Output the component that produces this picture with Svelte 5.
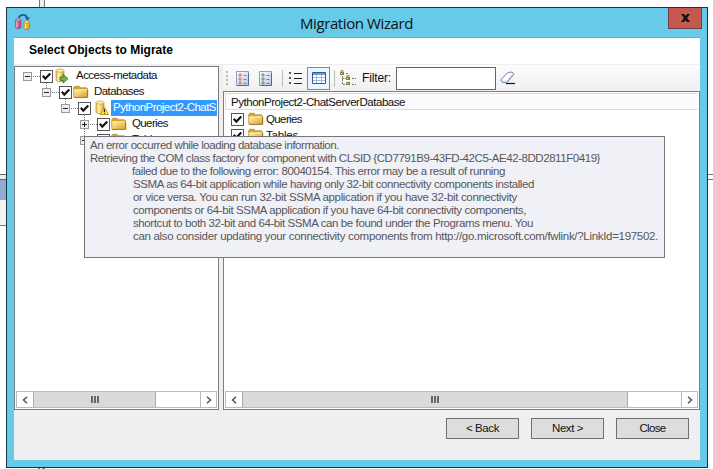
<script>
  const tree = [
    { label: 'Access-metadata', depth: 0, open: true, icon: 'source', width: 81 },
    { label: 'Databases', depth: 1, open: true, icon: 'folder', width: 50 },
    { label: 'PythonProject2-ChatS', depth: 2, open: true, icon: 'database', width: 103, selected: true },
    { label: 'Queries', depth: 3, open: false, icon: 'folder', width: 36 },
    { label: 'Tables', depth: 3, open: false, icon: 'folder', width: 32 }
  ];
  const objects = [
    { label: 'Queries', width: 36 },
    { label: 'Tables', width: 32 }
  ];
  const message = [
    { text: 'An error occurred while loading database information.', indent: 0, width: 249 },
    { text: 'Retrieving the COM class factory for component with CLSID {CD7791B9-43FD-42C5-AE42-8DD2811F0419}', indent: 0, width: 510 },
    { text: 'failed due to the following error: 80040154. This error may be a result of running', indent: 42, width: 373 },
    { text: 'SSMA as 64-bit application while having only 32-bit connectivity components installed', indent: 43, width: 401 },
    { text: 'or vice versa. You can run 32-bit SSMA application if you have 32-bit connectivity', indent: 43, width: 384 },
    { text: 'components or 64-bit SSMA application if you have 64-bit connectivity components,', indent: 43, width: 393 },
    { text: 'shortcut to both 32-bit and 64-bit SSMA can be found under the Programs menu. You', indent: 43, width: 400 },
    { text: 'can also consider updating your connectivity components from http://go.microsoft.com/fwlink/?LinkId=197502.', indent: 43, width: 525 }
  ];
  const buttons = [
    { label: '< Back', width: 33 },
    { label: 'Next >', width: 31 },
    { label: 'Close', width: 26 }
  ];

  // Tracks a label so that it takes the given number of pixels.
  function fit(node, width) {
    const natural = node.getBoundingClientRect().width;
    node.style.letterSpacing = `${(width - natural) / node.textContent.length}px`;
  }
</script>

{#snippet check()}
  <span class="check">
    <svg width="11" height="11" viewBox="0 0 11 11"><path d="M1.8 4.8 4.3 7.6 9.3 2.4" fill="none" stroke="#111" stroke-width="2.1" /></svg>
  </span>
{/snippet}

{#snippet folder()}
  <svg class="ico" width="16" height="14" viewBox="0 0 16 14">
    <path d="M.8 12V2.2L1.8 1.3h4.3l1.2 1.5h6.2l.9.9V12z" fill="#d9a52c" stroke="#b98a2a" stroke-width=".8" />
    <path d="M1.2 12V4.6h13.200V12z" fill="url(#gold)" />
    <path d="M1.500 4.8h12.900" stroke="#fff3b8" stroke-width=".9" />
    <path d="M1 12.4h13.7V4.6" fill="none" stroke="#8f6c22" stroke-width=".9" />
  </svg>
{/snippet}

{#snippet scrollbar(thumb)}
  <div class="scroll">
    <span class="arrow"><svg width="6" height="8" viewBox="0 0 6 8"><path d="M5 .7 1.5 4 5 7.3" /></svg></span>
    <span class="thumb" style:width="{thumb}px"><i></i><i></i><i></i></span>
    <span class="track"></span>
    <span class="arrow end"><svg width="6" height="8" viewBox="0 0 6 8"><path d="M1 .7 4.5 4 1 7.3" /></svg></span>
  </div>
{/snippet}

<div class="desktop">
  <svg class="behind" width="713" height="469" viewBox="0 0 713 469">
    <path d="M39.5 0v8M44.5 0v8" stroke="#777" />
    <path d="M40 0h4v8h-4z" fill="#ededf0" />
    <path d="M0 174h6v5H0z" fill="#eee" />
    <path d="M0 174.5h6M0 179.5h6" stroke="#666" />
    <path d="M0 180h6v20H0z" fill="#91acd3" />
    <path d="M0 200h6v25H0z" fill="#f3f3f3" />
    <path d="M0 225.5h6M708 174.5h5M708 179.5h5" stroke="#777" />
    <path d="M38 468.5h2M42 468.5h3" stroke="#777" />
  </svg>

  <div class="window">
    <header>
      <svg class="app" width="16" height="16" viewBox="0 0 16 16">
        <path d="M.7 6v7c0 2.3 5.3 2.3 5.3 0V6z" fill="#bf5a8b" stroke="#70375c" stroke-width=".6" />
        <path d="M2 6.5v7" stroke="#eec0d7" stroke-width="1.3" />
        <ellipse cx="3.4" cy="6" rx="2.7" ry="1.2" fill="#e3a4c2" stroke="#80466a" stroke-width=".6" />
        <path d="M9 8v6c0 2 5.6 2 5.6 0V8z" fill="#e7b324" stroke="#8a681e" stroke-width=".6" />
        <path d="M10.5 8.5v6" stroke="#fff1a6" stroke-width="1.4" />
        <ellipse cx="11.8" cy="8" rx="2.8" ry="1.2" fill="#ffe98c" stroke="#9a761e" stroke-width=".6" />
        <path d="M3.5 3.8C5.5-.1 11-.2 12.4 4" fill="none" stroke="#2257a8" stroke-width="1.6" />
        <path d="M9.7 3.5h5.4l-2.6 3.3z" fill="#2257a8" />
      </svg>
      <h1><span use:fit={113}>Migration Wizard</span></h1>
      <button class="x" aria-label="Close window">
        <svg width="9" height="8" viewBox="0 0 9 8"><path d="M0 0h3l1.5 2L6 0h3L6 4l3 4H6L4.500 6 3 8H0l3-4z" fill="#111" /></svg>
      </button>
    </header>

    <main>
      <div class="heading"><b use:fit={144}>Select Objects to Migrate</b></div>
      <div class="panes">
        <section class="tree">
          <div class="nodes">
            <svg class="guides" width="90" height="80" viewBox="0 0 90 80">
              <path d="M18 9.500h7M31.500 16v5M37 25.500h7M50.500 32v5M56 41.500h7M69.500 48v5M75 57.500h7M69.500 62v8" />
            </svg>
            {#each tree as node}
              <div class="node" style:padding-left="{8 + node.depth * 19}px">
                <span class="expander"><svg width="7" height="7" viewBox="0 0 7 7"><path d={node.open ? 'M1 3.500h5' : 'M1 3.500h5M3.500 1v5'} stroke="#222" /></svg></span>
                {@render check()}
                {#if node.icon === 'folder'}
                  {@render folder()}
                {:else}
                  <svg class="ico db" class:warn={node.icon === 'database'} width="16" height="16" viewBox="0 0 16 16">
                    <path d="M1 2.700v9.300c0 2.300 8 2.300 8 0V2.700z" fill="url(#barrel)" stroke="#b58a28" stroke-width=".7" />
                    <ellipse cx="5" cy="2.600" rx="4" ry="1.600" fill="#fff0aa" stroke="#c59b36" stroke-width=".7" />
                    {#if node.icon === 'source'}
                      <path d="M5 9h3V6.400l5 4.300-5 4.400v-2.700H5z" fill="#65bd45" stroke="#276c1e" stroke-width=".8" />
                    {:else}
                      <path d="M9.400 7 13.500 14.500H5.300z" fill="#ffe338" stroke="#a98a12" stroke-width=".8" />
                      <path d="M9.400 9v3M9.400 12.700v1" stroke="#222" stroke-width="1.100" />
                    {/if}
                  </svg>
                {/if}
                <span class="label" class:selected={node.selected}><span use:fit={node.width}>{node.label}</span></span>
              </div>
            {/each}
          </div>
          {@render scrollbar(123)}
        </section>

        <section class="right">
          <div class="toolbar">
            <span class="grip"><i></i><i></i><i></i><i></i></span>
            {#each ['#c35069', '#52647f'] as tint}
              <svg class="sheet" width="14" height="17" viewBox="0 0 14 17">
                <path d="M.5 1.500h12v14H.5z" fill="url(#page)" stroke="#91a0bd" />
                <path d="M12.500 3v12.500H1" fill="none" stroke="#56688e" />
                <path d="M3 4h2v2H3zM3 8h2v2H3zM3 12h2v2H3z" fill="#fff" stroke={tint} stroke-width=".8" />
                <path d="M7.500 5.500h3M7.500 9.500h3M7.500 13.500h3" stroke={tint} stroke-width=".8" />
              </svg>
            {/each}
            <span class="sep"></span>
            <svg class="list" width="14" height="14" viewBox="0 0 14 14">
              <path d="M5 2.500h8M5 7.500h8M5 12.500h8" stroke="#222" />
              <path d="M0 1h2v2H0zM0 6h2v2H0zM0 11h2v2H0z" fill="#3c5e91" />
            </svg>
            <span class="pressed">
              <svg width="14" height="12" viewBox="0 0 14 12">
                <path d="M.5.5h13v11H.5z" fill="#fff" stroke="#34598c" />
                <path d="M1 1h12v2H1z" fill="#6d9bd8" />
                <path d="M4.500 3v8M9.500 3v8M1 5.500h12M1 8.500h12" stroke="#a5bad6" />
              </svg>
            </span>
            <span class="sep two"></span>
            <svg class="hier" width="17" height="16" viewBox="0 0 17 16">
              <path d="M2.500 6v8.500h4M2.500 8.500h4M6 3.500h3M12 8.500h4M12 14.500h4" fill="none" stroke="#777" stroke-dasharray="2 1" />
              <path d="M0 2h4v3H0zM6 7h4v3H6zM6 12h4v3H6z" fill="#8d8230" />
              <path d="M1 3h1v1H1zM7 8h1v1H7zM7 13h1v1H7z" fill="#f3eca0" />
              <path d="M1 2V.6h2V2M7 7V5.600h2V7" fill="none" stroke="#77702a" stroke-width=".8" />
            </svg>
            <label for="filter"><span use:fit={29}>Filter:</span></label>
            <input id="filter" />
            <svg class="eraser" width="16" height="14" viewBox="0 0 16 14">
              <path d="M1 8.500 7.500 2c2-1.500 7-1 6 1.500L7.500 11c-3 1.700-7 .2-6.500-2.500z" fill="#dce6f3" stroke="#586f93" stroke-width=".9" />
              <path d="M2 8.200 8 2.400c2-1 4-.7 4.500.1L6.500 9C5 9.700 3 9.500 2 8.200z" fill="#fff" />
              <path d="M6 12.500h9" stroke="#111" stroke-width="1.200" />
            </svg>
          </div>
          <div class="objects">
            <div class="column"><span use:fit={174}>PythonProject2-ChatServerDatabase</span></div>
            {#each objects as item}
              <div class="row">
                {@render check()}
                {@render folder()}
                <span use:fit={item.width}>{item.label}</span>
              </div>
            {/each}
            <div class="space"></div>
            {@render scrollbar(386)}
          </div>
        </section>
      </div>
      <footer>
        {#each buttons as button}
          <button><span use:fit={button.width}>{button.label}</span></button>
        {/each}
      </footer>
    </main>
  </div>

  <div class="tooltip">
    {#each message as line}
      <div style:padding-left="{line.indent}px"><span use:fit={line.width}>{line.text}</span></div>
    {/each}
  </div>

  <svg class="defs" width="0" height="0">
    <defs>
      <linearGradient id="gold" x1="0" y1="0" x2="1" y2="1"><stop stop-color="#fff0a4" /><stop offset="1" stop-color="#e0a22c" /></linearGradient>
      <linearGradient id="barrel"><stop stop-color="#edbd45" /><stop offset=".35" stop-color="#fff3b4" /><stop offset="1" stop-color="#dc9e22" /></linearGradient>
      <linearGradient id="page" x1="0" y1="0" x2="1" y2="1"><stop stop-color="#fff" /><stop offset="1" stop-color="#b9c7e2" /></linearGradient>
    </defs>
  </svg>
</div>

<style>
  :global(body) { margin: 0; background: #fff; }
  .desktop, .desktop * { box-sizing: border-box; }
  .desktop {
    position: relative; width: 713px; height: 469px; padding: 7px 0 0 6px; overflow: hidden;
    font: 11.5px/13px "Liberation Sans", Arial, sans-serif; color: #111; white-space: nowrap;
  }
  .behind, .defs { position: absolute; left: 0; top: 0; }
  svg { display: block; flex: none; }
  .window {
    position: relative; width: 702px; height: 461px; border: 1px solid #17343f; background: #66cae8;
    display: flex; flex-direction: column; padding: 0 7px 7px;
  }
  header { height: 30px; flex: none; display: flex; align-items: flex-start; border-bottom: 1px solid #62b2c9; }
  .app { margin: 6px 0 0 1px; }
  h1 { margin: 6px 0 0; flex: 1; padding-left: 269px; font: 15px/18px "Open Sans", "Noto Sans", sans-serif; color: #111; }
  .x { width: 34px; height: 21px; margin-right: -2px; padding: 0; border: 1px solid #713e42; border-top: 0; background: #c6594f; display: flex; align-items: center; justify-content: center; }
  main { flex: 1; min-height: 0; display: flex; flex-direction: column; background: #efefef; }
  .heading { height: 27px; flex: none; padding: 6px 0 0 15px; background: #fff; border-bottom: 1px solid #eee; }
  .heading b { font-size: 12px; color: #000; }
  .panes { height: 345px; flex: none; display: flex; gap: 4px; }
  .tree { width: 205px; margin-top: 1px; border: 1px solid #7c7e86; background: #fff; display: flex; flex-direction: column; padding: 0 1px 1px; }
  .nodes { position: relative; flex: 1; overflow: hidden; padding-top: 1px; margin-left: -1px; }
  .guides { position: absolute; left: 0; top: 0; fill: none; stroke: #777; stroke-dasharray: 1 1; }
  .node { position: relative; height: 16px; display: flex; align-items: center; }
  .expander { flex: none; width: 9px; height: 9px; border: 1px solid #999; background: #eee; margin-right: 8px; }
  .check { flex: none; width: 13px; height: 13px; border: 1px solid #555; background: #fff; }
  .node .ico { margin-left: 1px; }
  .node .db { margin-left: 2px; }
  .node .warn { margin-left: 4px; }
  .label { flex: 1; height: 16px; margin-left: 3px; padding: 1px 0 0 2px; }
  .label.selected { background: #3399ff; color: #fff; margin-left: 0; }
  .scroll { height: 17px; flex: none; display: flex; border: 1px solid #bbb; background: #fff; }
  .arrow { width: 16px; flex: none; display: flex; align-items: center; justify-content: center; }
  .arrow path { fill: none; stroke: #555; stroke-width: 1.5; }
  .arrow.end { border-left: 1px solid #bbb; }
  .thumb { flex: none; background: #dadada; border: solid #aaa; border-width: 0 1px; display: flex; align-items: center; justify-content: center; gap: 1px; }
  .thumb i { width: 2px; height: 7px; background: #666; }
  .track { flex: 1; }
  .right { flex: 1; min-width: 0; display: flex; flex-direction: column; }
  .toolbar { height: 26px; flex: none; display: flex; align-items: center; background: linear-gradient(#fcfcfc, #f0f0f0); padding-left: 3px; }
  .grip { width: 2px; margin-right: 8px; display: flex; flex-direction: column; gap: 2px; }
  .grip i { width: 2px; height: 2px; background: #bbb; }
  .sheet { margin-right: 9px; }
  .sep { width: 1px; height: 17px; background: #bbb; margin-right: 6px; }
  .sep.two { margin: 0 5px 0 4px; }
  .pressed { width: 23px; height: 23px; margin-left: 4px; border: 1px solid #3e9bea; background: #eaf5ff; display: flex; align-items: center; justify-content: center; }
  .toolbar label { margin: 0 5px 0 5px; font-size: 12px; }
  .toolbar input { width: 100px; height: 23px; padding: 0; border: 1px solid #666; background: #fff; border-radius: 0; }
  .eraser { margin-left: 4px; }
  .objects { flex: 1; min-height: 0; display: flex; flex-direction: column; background: #fff; border: 1px solid #7c7e86; padding: 1px; }
  .column { height: 17px; flex: none; border: 1px solid #ddd; border-right: 0; background: #fcfcfc; padding: 2px 0 0 5px; margin-bottom: 1px; }
  .row { height: 16px; flex: none; display: flex; align-items: center; padding-left: 6px; }
  .row .ico { margin: 0 2px 0 4px; }
  .space { flex: 1; }
  footer { display: flex; justify-content: flex-end; gap: 12px; padding: 8px 11px 0 0; }
  footer button { width: 73px; height: 21px; padding: 0; border: 1px solid #707070; background: #ddd; color: #111; font: inherit; }
  .tooltip { position: absolute; left: 84px; top: 136px; width: 581px; height: 122px; padding: 2px 0 0 5px; border: 1px solid #767676; background: #f0f0f7; color: #575757; }
  .tooltip div { height: 13px; }
</style>
